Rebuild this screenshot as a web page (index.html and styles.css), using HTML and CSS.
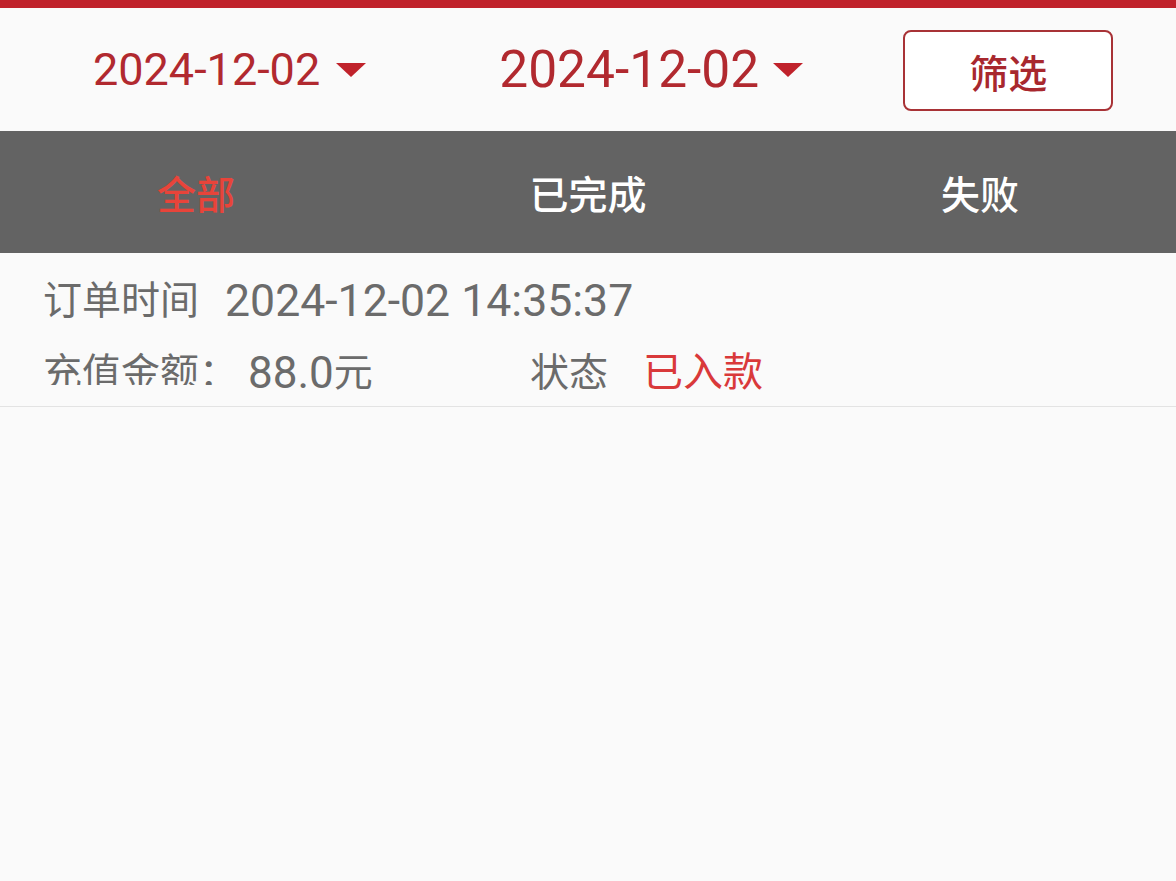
FILE: index.html
```html
<!DOCTYPE html>
<html lang="zh-CN">
<head>
    <meta charset="UTF-8">
    <meta name="viewport" content="width=device-width, initial-scale=1.0">
    <title>充值记录</title>
    <link rel="stylesheet" href="styles.css">
</head>
<body>
    <div class="top-bar"></div>
    <div class="filter-bar">
        <div class="date-pick small">
            <span class="date-text">2024-12-02</span>
            <span class="arrow"></span>
        </div>
        <div class="date-pick big">
            <span class="date-text">2024-12-02</span>
            <span class="arrow"></span>
        </div>
        <button class="filter-btn">筛选</button>
    </div>
    <div class="tabs">
        <div class="tab active">全部</div>
        <div class="tab">已完成</div>
        <div class="tab">失败</div>
    </div>
    <div class="list">
        <div class="item">
            <div class="row">
                <span class="label">订单时间</span>
                <span class="num time">2024-12-02 14:35:37</span>
            </div>
            <div class="row">
                <div class="amount">
                    <span class="label clip">充值金额：</span>
                    <span class="num money">88.0</span><span class="label">元</span>
                </div>
                <span class="label">状态</span>
                <span class="status ok">已入款</span>
            </div>
        </div>
    </div>
</body>
</html>
```
FILE: styles.css
```css
body {
    margin: 0;
    background: #fafafa;
    font-family: Roboto, "Noto Sans CJK SC", sans-serif;
}
.top-bar {
    height: 8px;
    background: #c0222b;
}
.filter-bar {
    height: 123px;
    display: flex;
    align-items: center;
    padding-left: 93px;
}
.date-pick {
    display: flex;
    align-items: center;
    color: #b1292f;
}
.date-pick.small .date-text {
    font-size: 45px;
}
.date-pick.big {
    margin-left: 133px;
}
.date-pick.big .date-text {
    font-size: 51.5px;
}
.arrow {
    width: 0;
    height: 0;
    border-left: 15px solid transparent;
    border-right: 15px solid transparent;
    border-top: 14px solid #c0222b;
    margin-left: 16px;
}
.date-pick.big .arrow {
    margin-left: 14px;
}
.filter-btn {
    margin-left: 100px;
    margin-top: 2px;
    width: 210px;
    height: 81px;
    border: 2px solid #a83236;
    border-radius: 8px;
    background: #fff;
    color: #a8282e;
    font-family: inherit;
    font-size: 39px;
    font-weight: 500;
    padding: 0;
}
.tabs {
    display: flex;
    height: 122px;
    background: #636363;
}
.tab {
    flex: 1;
    display: flex;
    align-items: center;
    justify-content: center;
    color: #fff;
    font-size: 39px;
    font-weight: 500;
}
.tab.active {
    color: #e8443a;
}
.item {
    padding: 20px 43px 5px;
    border-bottom: 1px solid #e3e3e3;
}
.row {
    display: flex;
    align-items: flex-start;
    height: 56px;
    line-height: 56px;
    color: #6b6b6b;
}
.row + .row {
    margin-top: 16px;
}
.label {
    font-size: 39px;
}
.num {
    font-size: 44px;
}
.time {
    margin-left: 26px;
    font-size: 44.6px;
}
.amount {
    width: 487px;
    display: flex;
}
.clip {
    display: inline-block;
    height: 40px;
    overflow: hidden;
}
.money {
    margin-left: 10px;
}
.status {
    font-size: 40px;
    margin-left: 35px;
}
.status.ok {
    color: #d9393a;
}
```
